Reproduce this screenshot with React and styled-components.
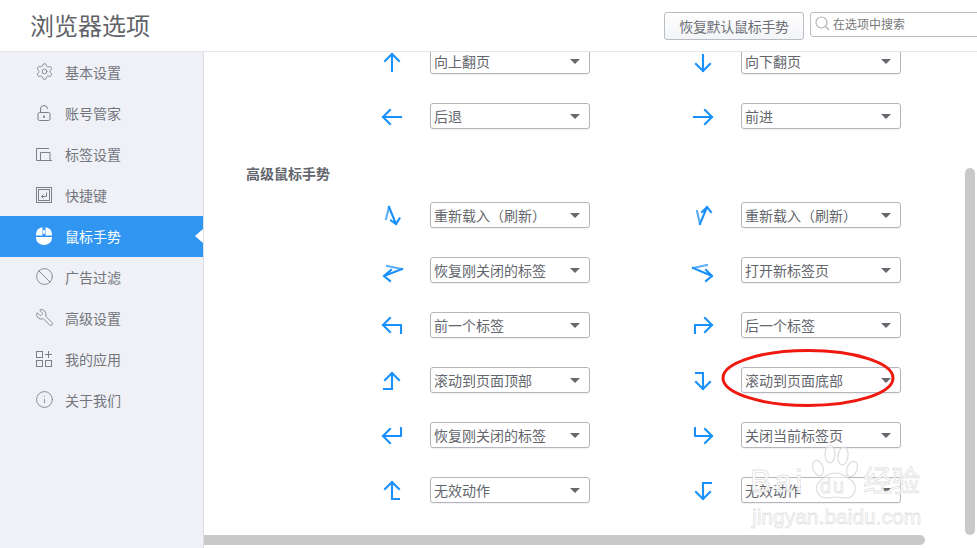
import styled, { createGlobalStyle } from "styled-components";
import { Settings, Ban, Wrench, Info } from "lucide-react";

const FONT = `"Liberation Sans", "Noto Sans CJK SC", sans-serif`;

const GlobalStyle = createGlobalStyle`
  html, body {
    margin: 0;
    padding: 0;
    height: 100%;
    overflow: hidden;
    background: #fff;
  }
  #root {
    height: 100%;
  }
`;

const Page = styled.div`
  width: 977px;
  height: 548px;
  display: flex;
  flex-direction: column;
  position: relative;
  overflow: hidden;
  font-family: ${FONT};
  color: #666;
`;

const Header = styled.header`
  flex: 0 0 52px;
  box-sizing: border-box;
  display: flex;
  align-items: flex-start;
  padding: 12px 0 0 30px;
  background: #fff;
  border-bottom: 1px solid #e6e7ec;
  position: relative;
  z-index: 2;
  overflow: hidden;
`;

const Title = styled.h1`
  margin: 0 auto 0 0;
  font-size: 24px;
  line-height: 30px;
  font-weight: 400;
  color: #5f6368;
`;

const ResetButton = styled.button`
  width: 140px;
  height: 28px;
  padding: 0;
  box-sizing: border-box;
  border: 1px solid #b9bcc4;
  border-radius: 3px;
  background: linear-gradient(#fff, #f3f4f7);
  font: 14px ${FONT};
  letter-spacing: -0.3px;
  color: #6d7078;
  flex-shrink: 0;
`;

const SearchBox = styled.div`
  width: 180px;
  height: 25px;
  margin: 0 -13px 0 6px;
  box-sizing: border-box;
  border: 1px solid #bcbec5;
  border-radius: 3px;
  display: flex;
  align-items: center;
  gap: 3px;
  padding: 0 0 2px 4px;
  font-size: 12px;
  color: #777;
  flex-shrink: 0;
`;

const Body = styled.div`
  flex: 1;
  display: flex;
  min-height: 0;
`;

const Sidebar = styled.nav`
  flex: 0 0 203px;
  box-sizing: border-box;
  background: #eff1f6;
  border-right: 1px solid #dcdee5;
`;

const NavItem = styled.div`
  height: 41px;
  width: ${(p) => (p.$active ? "203px" : "auto")};
  display: flex;
  align-items: center;
  gap: 13px;
  padding: 0 0 2px 36px;
  box-sizing: border-box;
  font-size: 14px;
  position: relative;
  color: ${(p) => (p.$active ? "#fff" : "#73767d")};
  background: ${(p) => (p.$active ? "#3096f2" : "transparent")};
  &::after {
    content: "";
    display: ${(p) => (p.$active ? "block" : "none")};
    position: absolute;
    right: 0;
    top: 13px;
    border: 7px solid transparent;
    border-left: 0;
    border-right: 8px solid #fff;
  }
`;

const NavIconBox = styled.span`
  width: 16px;
  height: 16px;
  display: flex;
  align-items: center;
  justify-content: center;
  color: ${(p) => (p.$active ? "#fff" : "#7d8087")};
  svg {
    display: block;
    flex-shrink: 0;
  }
`;

const FlippedWrench = styled(Wrench)`
  transform: scaleX(-1);
`;

const Main = styled.main`
  flex: 1;
  min-width: 0;
  position: relative;
  overflow: hidden;
  background: #fff;
`;

/* scrolled down a little, so the first row runs under the header */
const ScrollContent = styled.div`
  margin-top: -4px;
  padding-left: 43px;
`;

const SectionTitle = styled.h2`
  margin: 35px 0 18px -1px;
  height: 20px;
  font-size: 14px;
  line-height: 20px;
  font-weight: 700;
  color: #63666c;
`;

const GestureGrid = styled.div`
  display: grid;
  grid-template-columns: 214px 214px;
  column-gap: 97px;
  row-gap: 29px;
  margin-left: 129px;
`;

const GestureRow = styled.div`
  display: flex;
  align-items: center;
  gap: 22px;
  height: 26px;
`;

const ArrowIcon = styled.svg`
  width: 32px;
  height: 32px;
  flex-shrink: 0;
  fill: none;
  stroke: #1a90fb;
  stroke-width: 2.1;
  stroke-linecap: square;
  stroke-linejoin: miter;
`;

const FadedStroke = styled.path`
  stroke: #5aaefc;
`;

const ActionSelect = styled.div`
  width: 160px;
  height: 26px;
  box-sizing: border-box;
  border: 1px solid #b5b5bd;
  border-radius: 3px;
  box-shadow: 0 1px 1px rgba(0, 0, 0, 0.06);
  background: #fff;
  display: flex;
  align-items: center;
  justify-content: space-between;
  padding: 0 9px 0 3px;
  font-size: 14px;
  color: #63666c;
  white-space: nowrap;
  &::after {
    content: "";
    border: 5px solid transparent;
    border-top: 5px solid #66686d;
    border-bottom: 0;
  }
`;

const VerticalThumb = styled.div`
  position: absolute;
  left: 761px;
  top: 116px;
  width: 10px;
  height: 367px;
  border-radius: 5px;
  background: #c9c9c9;
`;

const HorizontalThumb = styled.div`
  position: absolute;
  left: 0;
  top: 483px;
  width: 721px;
  height: 10px;
  border-radius: 0 5px 5px 0;
  background: #c9c9c9;
`;

const RedRing = styled.svg`
  position: absolute;
  left: 720px;
  top: 348px;
  width: 178px;
  height: 62px;
  z-index: 3;
  fill: none;
  stroke: #f0190f;
  stroke-width: 3;
`;

const Watermark = styled.div`
  position: absolute;
  left: 748px;
  top: 443px;
  width: 180px;
  height: 90px;
  z-index: 3;
  pointer-events: none;
  color: rgba(255, 255, 255, 0.85);
  -webkit-text-stroke: 0.8px rgba(212, 212, 212, 0.7);
`;

const PawMark = styled.svg`
  position: absolute;
  left: 54px;
  top: 0;
  width: 66px;
  height: 58px;
  fill: rgba(255, 255, 255, 0.55);
  stroke: rgba(212, 212, 212, 0.8);
  stroke-width: 1.2;
`;

const BaiLabel = styled.span`
  position: absolute;
  left: 2px;
  top: 18px;
  font-size: 32px;
  line-height: 40px;
  letter-spacing: 3px;
`;

const DuLabel = styled.span`
  position: absolute;
  left: 72px;
  top: 30px;
  font-size: 20px;
  line-height: 26px;
  letter-spacing: 2px;
`;

const JingyanLabel = styled.span`
  position: absolute;
  left: 115px;
  top: 21px;
  font-size: 29px;
  line-height: 36px;
  letter-spacing: -1px;
`;

const UrlLabel = styled.span`
  position: absolute;
  left: 4px;
  top: 59px;
  font-size: 21px;
  line-height: 30px;
  white-space: nowrap;
`;

const lineIcon = (content) => (
  <svg width="16" height="16" viewBox="0 0 16 16" fill="none" stroke="currentColor" strokeWidth="1">
    {content}
  </svg>
);

const navItems = [
  { label: "基本设置", icon: <Settings size={19} strokeWidth={1.1} /> },
  {
    label: "账号管家",
    icon: lineIcon(
      <>
        <rect x="2" y="7.5" width="12" height="8" rx="1.5" />
        <path d="M4.5 7.5V4a3.5 3.5 0 0 1 7 0" />
        <path d="M8 10.5v2.5" strokeWidth="1.6" />
      </>
    ),
  },
  {
    label: "标签设置",
    icon: lineIcon(
      <>
        <path d="M0.5 14.5V2.5H13" />
        <path d="M4.5 14.5V6.5H14V14.5" />
        <path d="M0.5 14.5H16" />
      </>
    ),
  },
  {
    label: "快捷键",
    icon: lineIcon(
      <>
        <rect x="0.5" y="0.5" width="15" height="15" />
        <rect x="2.5" y="2.5" width="11" height="11" />
        <path d="M10.5 5.5V9.5H5.5" />
        <path d="M7.5 7.5L5.5 9.5L7.5 11.5" />
      </>
    ),
  },
  {
    label: "鼠标手势",
    active: true,
    icon: (
      <svg width="16" height="18" viewBox="0 0 16 18">
        <path fill="currentColor" d="M0 8.5V7a7 7 0 0 1 6.5-6.8V8.5ZM9.5 0.2A7 7 0 0 1 16 7V8.5H9.5ZM0 10H16V11a8 7 0 0 1-16 0Z" />
        <rect x="7" y="3" width="2" height="4" rx="1" fill="currentColor" />
      </svg>
    ),
  },
  { label: "广告过滤", icon: <Ban size={19} strokeWidth={1.1} /> },
  { label: "高级设置", icon: <FlippedWrench size={19} strokeWidth={1.1} /> },
  {
    label: "我的应用",
    icon: lineIcon(
      <>
        <rect x="0.5" y="0.5" width="6" height="6" />
        <rect x="0.5" y="9.5" width="6" height="6" />
        <rect x="9.5" y="9.5" width="6" height="6" />
        <path d="M12.5 0V7M9 3.5H16" />
      </>
    ),
  },
  { label: "关于我们", icon: <Info size={19} strokeWidth={1.1} /> },
];

// arrow strokes: d is the gesture line, faded is the lighter lead-in of the zigzag ones
const basicRows = [
  [
    { text: "向上翻页", d: "M16 26V9M9 16L16 9L23 16" },
    { text: "向下翻页", d: "M16 10V26M9 19L16 26L23 19" },
  ],
  [
    { text: "后退", d: "M7 17H25M14 10L7 17L14 24" },
    { text: "前进", d: "M7 17H25M18 10L25 17L18 24" },
  ],
];

const advancedRows = [
  [
    { text: "重新载入（刷新）", faded: "M10 20L13 8", d: "M13 8L20 25M15 21.5L20 25L23.5 19.5" },
    { text: "重新载入（刷新）", faded: "M10 12L13 25", d: "M13 25L20 8M15 13L20 8L24 13" },
  ],
  [
    { text: "恢复刚关闭的标签", faded: "M11 12L26 15", d: "M26 15L8 22M15 16L8 22L14 27" },
    { text: "打开新标签页", faded: "M20 11L6 14", d: "M6 14L25 22M19 16L25 22L19 27" },
  ],
  [
    { text: "前一个标签", d: "M7 16H25V24M14 9L7 16L14 23" },
    { text: "后一个标签", d: "M8 24V16H25M18 9L25 16L18 23" },
  ],
  [
    { text: "滚动到页面顶部", d: "M8 25H16V9M9 16L16 9L23 16" },
    { text: "滚动到页面底部", d: "M9 9H16V25M9 18L16 25L23 18" },
  ],
  [
    { text: "恢复刚关闭的标签", d: "M25 9V17H7M14 10L7 17L14 24" },
    { text: "关闭当前标签页", d: "M8 9V17H25M18 10L25 17L18 24" },
  ],
  [
    { text: "无效动作", d: "M23 25H16V8M9 15L16 8L23 15" },
    { text: "无效动作", d: "M24 9H16V25M9 18L16 25L23 18" },
  ],
];

const Gesture = ({ text, d, faded }) => (
  <GestureRow>
    <ArrowIcon viewBox="0 0 32 32">
      {faded && <FadedStroke d={faded} />}
      <path d={d} />
    </ArrowIcon>
    <ActionSelect>{text}</ActionSelect>
  </GestureRow>
);

const renderRows = (rows) =>
  rows.flat().map((item, i) => <Gesture key={i} {...item} />);

export default function App() {
  return (
    <Page>
      <GlobalStyle />
      <Header>
        <Title>浏览器选项</Title>
        <ResetButton>恢复默认鼠标手势</ResetButton>
        <SearchBox>
          <svg width="15" height="15" viewBox="0 0 15 15" fill="none" stroke="#b0b2b8" strokeWidth="1.2">
            <circle cx="6.5" cy="6.5" r="5.5" />
            <path d="M10.5 10.5L14 14" />
          </svg>
          在选项中搜索
        </SearchBox>
      </Header>
      <Body>
        <Sidebar>
          {navItems.map((item) => (
            <NavItem key={item.label} $active={item.active}>
              <NavIconBox $active={item.active}>{item.icon}</NavIconBox>
              {item.label}
            </NavItem>
          ))}
        </Sidebar>
        <Main>
          <ScrollContent>
            <GestureGrid>{renderRows(basicRows)}</GestureGrid>
            <SectionTitle>高级鼠标手势</SectionTitle>
            <GestureGrid>{renderRows(advancedRows)}</GestureGrid>
          </ScrollContent>
          <VerticalThumb />
          <HorizontalThumb />
        </Main>
      </Body>
      <RedRing viewBox="0 0 178 62">
        <ellipse cx="88" cy="30" rx="85" ry="27.5" />
      </RedRing>
      <Watermark>
        <PawMark viewBox="0 0 66 58">
          <ellipse cx="16" cy="25" rx="5" ry="8" transform="rotate(-20 16 25)" />
          <ellipse cx="28" cy="11" rx="5" ry="9" />
          <ellipse cx="41" cy="13" rx="5" ry="9" transform="rotate(8 41 13)" />
          <ellipse cx="50" cy="26" rx="5" ry="8" transform="rotate(20 50 26)" />
          <path d="M33 30C26 30 24 33 18 38C11 44 15 55 25 55C29 55 30 54 34 54C38 54 40 55 44 55C53 55 56 44 50 38C44 33 40 30 33 30Z" />
        </PawMark>
        <BaiLabel>Bai</BaiLabel>
        <DuLabel>du</DuLabel>
        <JingyanLabel>经验</JingyanLabel>
        <UrlLabel>jingyan.baidu.com</UrlLabel>
      </Watermark>
    </Page>
  );
}
